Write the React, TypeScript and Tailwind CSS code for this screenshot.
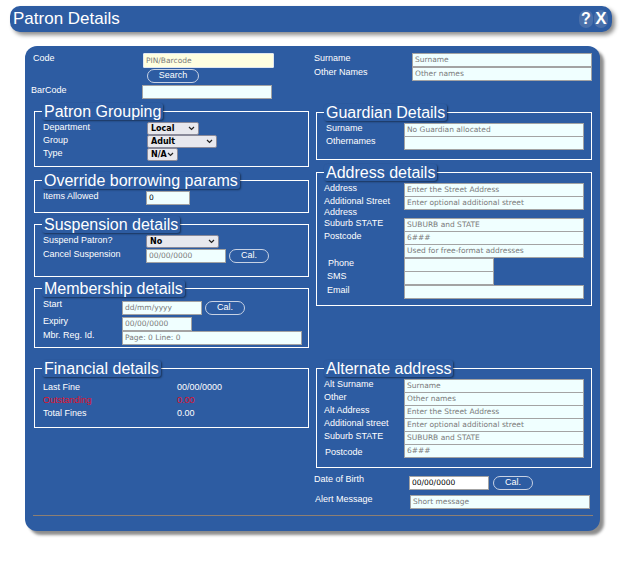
import React from 'react';

const font = { fontFamily: '"Liberation Sans", Arial, sans-serif' };

function Input({ w, ph = '', value = '', bg = 'bg-[#f0ffff]' }: { w: string; ph?: string; value?: string; bg?: string }) {
  return (
    <div className={`${w} h-[14px] ${bg} border border-[#a3a3a3] flex items-center px-[2px] text-[7.5px] leading-none shrink-0 ${value ? 'text-black' : 'text-[#7a7a7a]'}`} style={{ fontFamily: '"DejaVu Sans", Verdana, sans-serif' }}>
      {value || ph}
    </div>
  );
}

function Select({ w, value }: { w: string; value: string }) {
  return (
    <div className={`${w} h-[13px] bg-[#e8e8ee] border border-[#8a8a9a] rounded-[2px] flex items-center justify-between px-[3px] text-[8px] font-bold text-black shrink-0`} style={{ fontFamily: '"DejaVu Sans", Verdana, sans-serif' }}>
      <span>{value}</span>
      <svg width="7" height="5" viewBox="0 0 7 5"><path d="M1 1l2.5 2.5L6 1" stroke="#222" strokeWidth="1.2" fill="none" /></svg>
    </div>
  );
}

function Cal({ w = 'w-[40px]' }: { w?: string }) {
  return (
    <div className={`${w} h-[14px] rounded-full border border-[#c8d2e4] text-white text-[9px] flex items-center justify-center shrink-0`}>Cal.</div>
  );
}

function Box({ title, h, children, pl = 'pl-[8px]' }: { title: string; h: string; children?: React.ReactNode; pl?: string }) {
  return (
    <fieldset className={`border border-white ${h} px-0 pb-0 pt-0 ml-[1px] mr-[0px] relative`}>
      <legend className="ml-[7px] px-[2px] text-[16px] leading-[17px] text-white rounded-[3px] shadow-[1px_1px_2px_rgba(0,0,0,0.45)] bg-[#2d5ca2]">{title}</legend>
      <div className={`${pl} pt-[2px] flex flex-col`}>{children}</div>
    </fieldset>
  );
}

function Row({ label, lw, children, cls = 'h-[13px]', red = false }: { label: React.ReactNode; lw: string; children?: React.ReactNode; cls?: string; red?: boolean }) {
  return (
    <div className={`flex items-start ${cls}`}>
      <div className={`${lw} shrink-0 text-[9px] leading-[11px] ${red ? 'text-[#e0102a]' : 'text-white'}`}>{label}</div>
      <div className="flex items-center gap-[3px]">{children}</div>
    </div>
  );
}

export default function App() {
  return (
    <div className="w-[640px] h-[566px] bg-white relative" style={font}>
      <div className="pt-[6px] pl-[10px]">
        <div className="w-[602px] h-[26px] bg-[#2d5ca2] rounded-[10px] flex items-center justify-between px-[3px] shadow-[3px_3px_4px_rgba(0,0,0,0.45)]">
          <span className="text-white text-[17px]">Patron Details</span>
          <div className="flex items-center gap-[1px] pr-[1px]">
            <span className="w-[14px] h-[18px] rounded-full bg-[#4a70aa] text-white font-bold text-[16px] flex items-center justify-center">?</span>
            <span className="w-[14px] h-[18px] rounded-full bg-[#4a70aa] text-white font-bold text-[17px] flex items-center justify-center">X</span>
          </div>
        </div>
      </div>

      <div className="ml-[25px] mt-[14px] w-[575px] h-[485px] bg-[#2d5ca2] rounded-[12px] shadow-[4px_4px_3px_rgba(0,0,0,0.45)] px-[8px] pt-[7px] flex flex-col">
        <div className="flex gap-[5px]">
          {/* left column */}
          <div className="w-[277px] flex flex-col">
            <Row label="Code" lw="w-[110px]" cls="h-[16px]">
              <div className="w-[131px] h-[15px] border border-[#dfe6f0] rounded-[1px] bg-[#ffffe0] flex items-center px-[2px] text-[7.5px] text-[#7a7a7a]" style={{ fontFamily: '"DejaVu Sans", sans-serif' }}>PIN/Barcode</div>
            </Row>
            <div className="pl-[114px] h-[16px]">
              <div className="w-[52px] h-[14px] rounded-full border border-[#c8d2e4] text-white text-[9px] flex items-center justify-center">Search</div>
            </div>
            <Row label="BarCode" lw="w-[111px] -ml-[2px]" cls="h-[19px]">
              <Input w="w-[130px]" />
            </Row>
            <div className="mt-[-1px]" />
            <Box title="Patron Grouping" h="h-[64px]">
              <Row label="Department" lw="w-[104px]"><Select w="w-[52px]" value="Local" /></Row>
              <Row label="Group" lw="w-[104px]"><Select w="w-[70px]" value="Adult" /></Row>
              <Row label="Type" lw="w-[104px]"><Select w="w-[31px]" value="N/A" /></Row>
            </Box>
            <div className="h-[5px]" />
            <Box title="Override borrowing params" h="h-[41px]">
              <Row label="Items Allowed" lw="w-[103px]"><Input w="w-[44px]" value="0" /></Row>
            </Box>
            <div className="h-[3px]" />
            <Box title="Suspension details" h="h-[61px]">
              <Row label="Suspend Patron?" lw="w-[103px]" cls="h-[13px]"><Select w="w-[73px]" value="No" /></Row>
              <Row label="Cancel Suspension" lw="w-[103px]" cls="h-[15px] mt-[1px]"><Input w="w-[80px]" ph="00/00/0000" /><Cal /></Row>
            </Box>
            <div className="h-[3px]" />
            <Box title="Membership details" h="h-[68px]">
              <Row label="Start" lw="w-[79px]" cls="h-[16px]"><div className="mt-[2px] flex gap-[3px]"><Input w="w-[80px]" ph="dd/mm/yyyy" /><Cal /></div></Row>
              <Row label="Expiry" lw="w-[79px]" cls="h-[14px] mt-[1px]"><div className="mt-[1px]"><Input w="w-[70px]" ph="00/00/0000" /></div></Row>
              <Row label="Mbr. Reg. Id." lw="w-[79px]" cls="h-[14px]"><div className="mt-[1px]"><Input w="w-[180px]" ph="Page: 0 Line: 0" /></div></Row>
            </Box>
            <div className="h-[12px]" />
            <Box title="Financial details" h="h-[68px]">
              <div className="pt-[3px]" />
              <Row label="Last Fine" lw="w-[134px]"><span className="text-white text-[9px] leading-[11px]">00/00/0000</span></Row>
              <Row label="Outstanding" lw="w-[134px]" red><span className="text-[#e0102a] text-[9px] leading-[11px]">0.00</span></Row>
              <Row label="Total Fines" lw="w-[134px]"><span className="text-white text-[9px] leading-[11px]">0.00</span></Row>
            </Box>
          </div>

          {/* right column */}
          <div className="w-[278px] flex flex-col">
            <Row label="Surname" lw="w-[98px]" cls="h-[14px]"><Input w="w-[180px]" ph="Surname" /></Row>
            <Row label="Other Names" lw="w-[98px]" cls="h-[37px]"><Input w="w-[180px]" ph="Other names" /></Row>
            <div className="pl-[1px] flex flex-col">
              <Box title="Guardian Details" h="h-[56px]" pl="pl-[9px]">
                <Row label="Surname" lw="w-[78px]"><Input w="w-[180px]" ph="No Guardian allocated" /></Row>
                <Row label="Othernames" lw="w-[78px]"><Input w="w-[180px]" /></Row>
              </Box>
              <div className="h-[4px]" />
              <Box title="Address details" h="h-[142px]" pl="pl-[7px]">
                <Row label="Address" lw="w-[80px]"><Input w="w-[180px]" ph="Enter the Street Address" /></Row>
                <Row label={<>Additional Street<br />Address</>} lw="w-[80px]" cls="h-[22px]"><Input w="w-[180px]" ph="Enter optional additional street" /></Row>
                <Row label="Suburb STATE" lw="w-[80px]"><Input w="w-[180px]" ph="SUBURB and STATE" /></Row>
                <Row label="Postcode" lw="w-[80px]"><Input w="w-[180px]" ph="6###" /></Row>
                <Row label="" lw="w-[80px]"><Input w="w-[180px]" ph="Used for free-format addresses" /></Row>
                <Row label={<span className="pl-[4px]">Phone</span>} lw="w-[80px]" cls="h-[13px] mt-[1px]"><Input w="w-[90px]" /></Row>
                <Row label={<span className="pl-[3px]">SMS</span>} lw="w-[80px]" cls="h-[14px]"><Input w="w-[90px]" /></Row>
                <Row label={<span className="pl-[3px]">Email</span>} lw="w-[80px]"><Input w="w-[180px]" /></Row>
              </Box>
              <div className="h-[54px]" />
              <Box title="Alternate address" h="h-[108px]" pl="pl-[7px]">
                <Row label="Alt Surname" lw="w-[80px]"><Input w="w-[180px]" ph="Surname" /></Row>
                <Row label="Other" lw="w-[80px]"><Input w="w-[180px]" ph="Other names" /></Row>
                <Row label="Alt Address" lw="w-[80px]"><Input w="w-[180px]" ph="Enter the Street Address" /></Row>
                <Row label="Additional street" lw="w-[80px]"><Input w="w-[180px]" ph="Enter optional additional street" /></Row>
                <Row label="Suburb STATE" lw="w-[80px]"><Input w="w-[180px]" ph="SUBURB and STATE" /></Row>
                <Row label={<span className="pl-[1px] leading-[16px]">Postcode</span>} lw="w-[80px]" cls="h-[14px]"><Input w="w-[180px]" ph="6###" /></Row>
              </Box>
            </div>
            <div className="h-[6px]" />
            <Row label="Date of Birth" lw="w-[95px]" cls="h-[20px]"><div className="mt-[2px] flex gap-[4px]"><Input w="w-[80px]" value="00/00/0000" bg="bg-white" /><Cal /></div></Row>
            <Row label={<span className="pl-[1px]">Alert Message</span>} lw="w-[96px]"><div className="mt-[1px]"><Input w="w-[180px]" ph="Short message" /></div></Row>
          </div>
        </div>
        <div className="mt-auto mb-[15px] border-t border-[#8d7f73] w-[560px]" />
      </div>
    </div>
  );
}
